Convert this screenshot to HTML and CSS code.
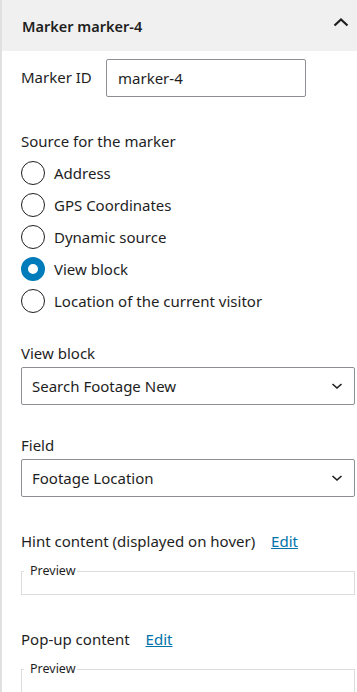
FILE: index.html
```html
<!DOCTYPE html>
<html lang="en">
<head>
    <meta charset="UTF-8">
    <meta name="viewport" content="width=device-width, initial-scale=1.0">
    <title>Marker marker-4</title>
    <link rel="stylesheet" href="styles.css">
</head>
<body>
    <div class="panel">
        <div class="panel-header">
            <h2>Marker marker-4</h2>
            <svg class="toggle" width="16" height="10" viewBox="0 0 16 10"><polyline points="1.5,8.5 8,2.5 14.5,8.5"/></svg>
        </div>

        <div class="panel-body">
            <div class="id-row">
                <label>Marker ID</label>
                <input class="text-input" type="text" value="marker-4">
            </div>

            <div class="section">
                <p class="label">Source for the marker</p>
                <div class="radios">
                    <div class="radio-row"><span class="radio"></span>Address</div>
                    <div class="radio-row"><span class="radio"></span>GPS Coordinates</div>
                    <div class="radio-row"><span class="radio"></span>Dynamic source</div>
                    <div class="radio-row"><span class="radio checked"></span>View block</div>
                    <div class="radio-row"><span class="radio"></span>Location of the current visitor</div>
                </div>
            </div>

            <div class="section tight">
                <p class="label">View block</p>
                <div class="select">
                    <span>Search Footage New</span>
                    <svg width="12" height="8" viewBox="0 0 12 8"><polyline points="1.5,2 6,6 10.5,2"/></svg>
                </div>
            </div>

            <div class="section tight">
                <p class="label">Field</p>
                <div class="select">
                    <span>Footage Location</span>
                    <svg width="12" height="8" viewBox="0 0 12 8"><polyline points="1.5,2 6,6 10.5,2"/></svg>
                </div>
            </div>

            <div class="section">
                <p class="label">Hint content (displayed on hover) <a href="#">Edit</a></p>
                <fieldset class="preview"><legend>Preview</legend></fieldset>
            </div>

            <div class="section">
                <p class="label">Pop-up content <a href="#">Edit</a></p>
                <fieldset class="preview"><legend>Preview</legend></fieldset>
            </div>
        </div>
    </div>
</body>
</html>
```

FILE: styles.css
```css
body {
    margin: 0;
    padding: 0;
    font-family: 'Noto Sans', 'Open Sans', sans-serif;
    font-size: 15px;
    color: #1e1e1e;
    background-color: #fff;
}

.panel {
    border-left: 2px solid #e0e0e0;
    min-height: 692px;
}

.panel-header {
    display: flex;
    align-items: center;
    justify-content: space-between;
    height: 51px;
    padding: 0 8px 0 20px;
    background-color: #f0f0f0;
    box-sizing: border-box;
}

.panel-header h2 {
    margin: 0;
    font-size: 14.5px;
    font-weight: 600;
}

.toggle {
    margin-top: -7px;
    fill: none;
    stroke: #1e1e1e;
    stroke-width: 2.2;
}

.panel-body {
    padding: 8px 2px 0 19px;
}

.id-row {
    display: flex;
    align-items: center;
}

.id-row label {
    width: 85px;
    margin-top: -2px;
}

.text-input {
    width: 200px;
    height: 38px;
    box-sizing: border-box;
    padding: 0 11px;
    border: 1px solid #8c8f94;
    border-radius: 2px;
    font-family: inherit;
    font-size: 15px;
    color: #1e1e1e;
}

.section {
    margin-top: 34px;
}

.section.tight {
    margin-top: 30px;
}

.label {
    margin: 0 0 4px;
    line-height: 20px;
}

.label a {
    margin-left: 12px;
    color: #0073aa;
}

.radios {
    display: flex;
    flex-direction: column;
    gap: 8px;
    margin-top: 10px;
}

.radio-row {
    display: flex;
    align-items: center;
    height: 24px;
}

.radio {
    width: 24px;
    height: 24px;
    box-sizing: border-box;
    border: 1.5px solid #1e1e1e;
    border-radius: 50%;
    margin-right: 9px;
}

.radio.checked {
    border: 7.5px solid #007cba;
}

.select {
    display: flex;
    align-items: center;
    justify-content: space-between;
    height: 38px;
    box-sizing: border-box;
    padding: 0 11px 0 10px;
    border: 1px solid #8c8f94;
    border-radius: 2px;
}

.select svg {
    fill: none;
    stroke: #1e1e1e;
    stroke-width: 1.6;
}

.preview {
    margin: 13px 0 0;
    padding: 0 0 16px 2px;
    border: 1px solid #dcdcdc;
}

.preview legend {
    padding: 0 2px 0 6px;
    font-size: 12.5px;
    line-height: 14px;
}
```
